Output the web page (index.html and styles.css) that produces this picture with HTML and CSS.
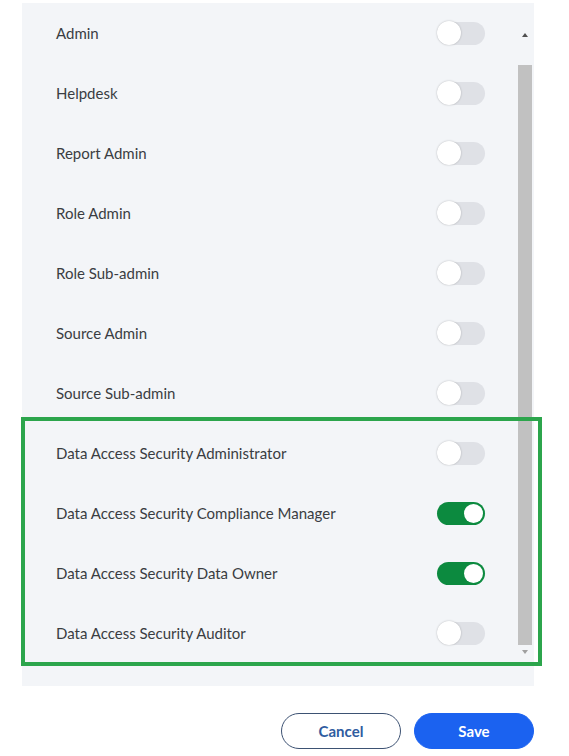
FILE: index.html
```html
<!DOCTYPE html>
<html>
<head>
<meta charset="utf-8">
<link rel="stylesheet" href="styles.css">
</head>
<body>
<div class="page">
  <div class="panel">
    <div class="list">
      <div class="row"><span class="label">Admin</span><span class="toggle"></span></div>
      <div class="row"><span class="label">Helpdesk</span><span class="toggle"></span></div>
      <div class="row"><span class="label">Report Admin</span><span class="toggle"></span></div>
      <div class="row"><span class="label">Role Admin</span><span class="toggle"></span></div>
      <div class="row"><span class="label">Role Sub-admin</span><span class="toggle"></span></div>
      <div class="row"><span class="label">Source Admin</span><span class="toggle"></span></div>
      <div class="row"><span class="label">Source Sub-admin</span><span class="toggle"></span></div>
      <div class="row"><span class="label">Data Access Security Administrator</span><span class="toggle"></span></div>
      <div class="row"><span class="label">Data Access Security Compliance Manager</span><span class="toggle on"></span></div>
      <div class="row"><span class="label">Data Access Security Data Owner</span><span class="toggle on"></span></div>
      <div class="row"><span class="label">Data Access Security Auditor</span><span class="toggle"></span></div>
    </div>
    <div class="scrollbar">
      <div class="arrow up"></div>
      <div class="thumb"></div>
      <div class="arrow down"></div>
    </div>
  </div>
  <div class="highlight"></div>
  <div class="footer">
    <button class="btn cancel">Cancel</button>
    <button class="btn save">Save</button>
  </div>
</div>
</body>
</html>
```

FILE: styles.css
```css
* { box-sizing: border-box; }
html, body { margin: 0; padding: 0; background: #ffffff; }
body { font-family: "Source Sans Pro", Lato, "Open Sans", "Liberation Sans", sans-serif; }

.page {
  position: relative;
  width: 569px;
  height: 756px;
  padding: 3px 0 0 22px;
}

.panel {
  width: 512px;
  height: 683px;
  background: #f3f5f8;
  display: flex;
  padding-bottom: 23px;
}

.list { width: 495px; }

.row {
  height: 60px;
  display: flex;
  align-items: center;
  justify-content: space-between;
  padding: 0 32px 0 34px;
}

.label {
  font-size: 15px;
  color: #3a3d42;
}

.toggle {
  position: relative;
  width: 48px;
  height: 23px;
  border-radius: 12px;
  background: #dfe1e6;
}
.toggle::after {
  content: "";
  position: absolute;
  left: 0;
  top: -0.5px;
  width: 24px;
  height: 24px;
  border-radius: 50%;
  background: #ffffff;
  box-shadow: 0 0 2px rgba(0,0,0,0.25);
}
.toggle.on { background: #0c8a3f; }
.toggle.on::after {
  left: auto;
  right: 2px;
  top: 2px;
  width: 19px;
  height: 19px;
  box-shadow: none;
}

.scrollbar {
  width: 16px;
  display: flex;
  flex-direction: column;
  align-items: center;
  padding-top: 30px;
}
.arrow {
  width: 0;
  height: 0;
  border-left: 3.5px solid transparent;
  border-right: 3.5px solid transparent;
}
.arrow.up { border-bottom: 4px solid #505050; margin-bottom: 28px; }
.arrow.down { border-top: 4px solid #a0a0a0; margin-top: 5px; }
.thumb {
  width: 14px;
  height: 580px;
  background: #c1c1c1;
}

.highlight {
  position: absolute;
  left: 21px;
  top: 417px;
  width: 521px;
  height: 249px;
  border: 4px solid #2ca54c;
}

.footer {
  width: 512px;
  display: flex;
  justify-content: flex-end;
  gap: 13px;
  margin-top: 27px;
}

.btn {
  width: 120px;
  height: 36px;
  border-radius: 18px;
  font-family: inherit;
  font-size: 15px;
  font-weight: 700;
  cursor: pointer;
}
.cancel {
  background: #ffffff;
  border: 1px solid #3d5273;
  color: #2f5ca0;
}
.save {
  background: #1b62f0;
  border: 1px solid #1b62f0;
  color: #ffffff;
}
```
